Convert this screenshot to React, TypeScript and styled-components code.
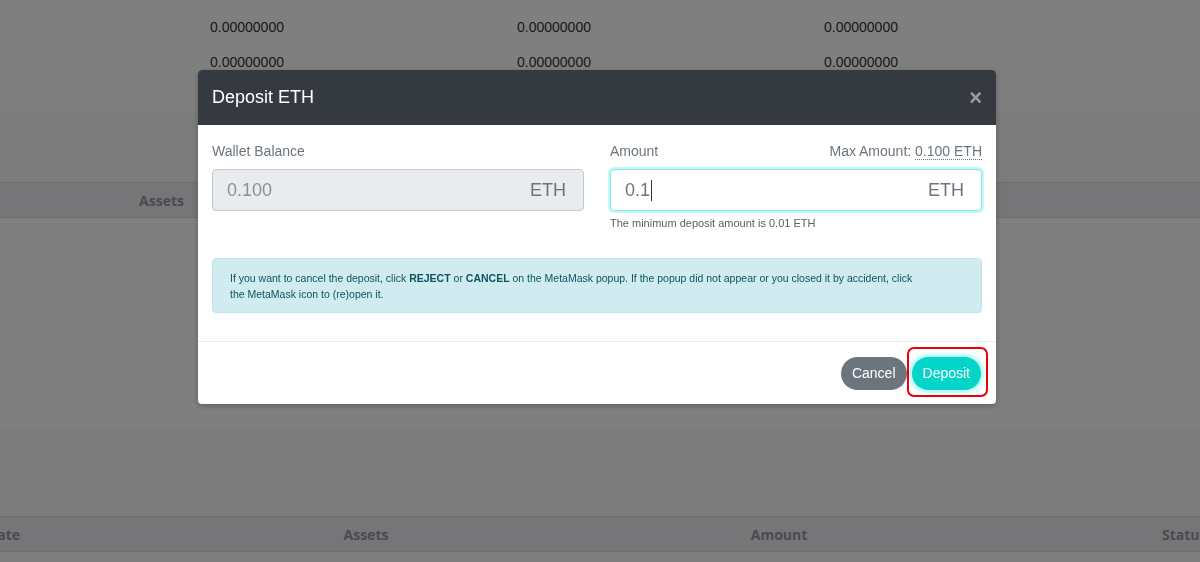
import styled, { createGlobalStyle } from "styled-components"

const GlobalStyle = createGlobalStyle`
  html, body {
    margin: 0;
    padding: 0;
    background: #fff;
    font-family: "Liberation Sans", Arial, sans-serif;
    overflow: hidden;
  }
`

const App = () => {
  return (
    <>
      <GlobalStyle />
      <Page>
        <Rows>
          <DataRow>
            <span />
            <Num>0.00000000</Num>
            <Num>0.00000000</Num>
            <Num>0.00000000</Num>
          </DataRow>
          <DataRow>
            <span />
            <Num>0.00000000</Num>
            <Num>0.00000000</Num>
            <Num>0.00000000</Num>
          </DataRow>
        </Rows>
        <Band $height={69} />
        <TopHead>
          <HeadCell $align="flex-end">Assets</HeadCell>
        </TopHead>
        <Blank $height={212} />
        <Band $height={86} />
        <BottomHead>
          <HeadCell $align="flex-end">Date</HeadCell>
          <HeadCell $align="center">Assets</HeadCell>
          <HeadCell $align="center">Amount</HeadCell>
          <HeadCell $align="flex-start">Status</HeadCell>
        </BottomHead>
      </Page>

      <Backdrop />

      <Modal>
        <Header>
          <Title>Deposit ETH</Title>
          <Close>×</Close>
        </Header>
        <Body>
          <Columns>
            <Field>
              <LabelRow>
                <Label>Wallet Balance</Label>
              </LabelRow>
              <InputBox $disabled>
                <Value $muted>0.100</Value>
                <Unit>ETH</Unit>
              </InputBox>
            </Field>
            <Field>
              <LabelRow>
                <Label>Amount</Label>
                <Label>
                  Max Amount: <Dotted>0.100 ETH</Dotted>
                </Label>
              </LabelRow>
              <InputBox $focused>
                <Value>
                  0.1<Caret />
                </Value>
                <Unit>ETH</Unit>
              </InputBox>
              <Help>The minimum deposit amount is 0.01 ETH</Help>
            </Field>
          </Columns>
          <Alert>
            If you want to cancel the deposit, click <b>REJECT</b> or <b>CANCEL</b> on the MetaMask popup. If the popup did not appear or you closed it by accident, click the MetaMask icon to (re)open it.
          </Alert>
        </Body>
        <Footer>
          <Button $variant="cancel">Cancel</Button>
          <Marked>
            <Button $variant="primary">Deposit</Button>
            <Highlight />
          </Marked>
        </Footer>
      </Modal>
    </>
  )
}

export default App

const Page = styled.div`
  width: 1200px;
  height: 562px;
  display: flex;
  flex-direction: column;
  background: #fff;
`

const Rows = styled.div`
  height: 113px;
  padding-top: 9px;
  box-sizing: border-box;
`

const DataRow = styled.div`
  display: grid;
  grid-template-columns: 210px 307px 307px 1fr;
  height: 35px;
  align-items: center;
`

const Num = styled.span`
  font-size: 14px;
  color: #333;
`

const Band = styled.div<{ $height: number }>`
  height: ${(p) => p.$height}px;
  background: #f8f8f8;
`

const Blank = styled.div<{ $height: number }>`
  height: ${(p) => p.$height}px;
`

const TopHead = styled.div`
  display: grid;
  grid-template-columns: 184px 1fr;
  height: 34px;
  background: #ececf0;
  border-top: 1px solid #dcdcdc;
  border-bottom: 1px solid #dcdcdc;
`

const BottomHead = styled.div`
  display: grid;
  grid-template-columns: 20px 692px 134px 316px 1fr;
  height: 34px;
  background: #ececf0;
  border-top: 1px solid #dcdcdc;
  border-bottom: 1px solid #dcdcdc;

  & > :last-child {
    grid-column: 5;
  }
`

const HeadCell = styled.div<{ $align: string }>`
  display: flex;
  align-items: center;
  justify-content: ${(p) => p.$align};
  white-space: nowrap;
  font-family: "Open Sans", "Liberation Sans", sans-serif;
  font-weight: 700;
  font-size: 14px;
  color: #96969e;
`

const Backdrop = styled.div`
  position: fixed;
  inset: 0;
  background: rgba(0, 0, 0, 0.5);
`

const Modal = styled.div`
  position: fixed;
  left: 198px;
  top: 70px;
  width: 798px;
  background: #fff;
  border-radius: 4px;
  box-shadow: 0 2px 6px rgba(0, 0, 0, 0.25);
`

const Header = styled.div`
  height: 55px;
  display: flex;
  align-items: center;
  justify-content: space-between;
  padding: 0 14px;
  background: #343a40;
  border-radius: 4px 4px 0 0;
`

const Title = styled.h5`
  margin: 0;
  font-size: 18px;
  font-weight: 400;
  color: #fff;
`

const Close = styled.span`
  font-size: 22px;
  font-weight: 700;
  color: #fff;
  opacity: 0.5;
  line-height: 1;
`

const Body = styled.div`
  padding: 16px 14px 28px;
`

const Columns = styled.div`
  display: grid;
  grid-template-columns: 372px 372px;
  column-gap: 26px;
  margin-bottom: 28px;
`

const Field = styled.div`
  display: flex;
  flex-direction: column;
`

const LabelRow = styled.div`
  display: flex;
  justify-content: space-between;
  height: 20px;
  margin-bottom: 8px;
`

const Label = styled.span`
  font-size: 14px;
  line-height: 20px;
  color: #6c757d;
`

const Dotted = styled.span`
  border-bottom: 1px dotted #6c757d;
`

const InputBox = styled.div<{ $disabled?: boolean; $focused?: boolean }>`
  height: 42px;
  box-sizing: border-box;
  display: flex;
  align-items: center;
  justify-content: space-between;
  padding: 0 17px 0 14px;
  border-radius: 4px;
  border: 1px solid ${(p) => (p.$focused ? "#7debea" : "#c4c9d0")};
  background: ${(p) => (p.$disabled ? "#e9ecef" : "#fff")};
  box-shadow: ${(p) => (p.$focused ? "0 0 0 2px rgba(125, 240, 240, 0.45)" : "none")};
`

const Value = styled.span<{ $muted?: boolean }>`
  display: flex;
  align-items: center;
  font-size: 18px;
  color: ${(p) => (p.$muted ? "#8a9199" : "#6c757d")};
`

const Caret = styled.span`
  display: inline-block;
  width: 1px;
  height: 21px;
  margin-left: 1px;
  background: #333;
`

const Unit = styled.span`
  font-size: 18px;
  color: #6c757d;
`

const Help = styled.small`
  margin-top: 5px;
  font-size: 11px;
  line-height: 14px;
  color: #5b6066;
`

const Alert = styled.div`
  padding: 11px 60px 10px 17px;
  border: 1px solid #bee5eb;
  border-radius: 4px;
  background: #d1ecf1;
  color: #0c5460;
  font-size: 10.5px;
  line-height: 16px;

  b {
    font-weight: 700;
  }
`

const Footer = styled.div`
  display: flex;
  justify-content: flex-end;
  align-items: center;
  gap: 5px;
  height: 62px;
  padding: 0 15px;
  border-top: 1px solid #e9ecef;
`

const Button = styled.button<{ $variant: "cancel" | "primary" }>`
  height: 33px;
  padding: 0 11px;
  border: none;
  border-radius: 17px;
  font-family: "Liberation Sans", Arial, sans-serif;
  font-size: 14px;
  color: #fff;
  background: ${(p) => (p.$variant === "primary" ? "#05d5c8" : "#6c757d")};
  box-shadow: ${(p) =>
    p.$variant === "primary" ? "0 0 5px 2px rgba(60, 235, 225, 0.55)" : "none"};
`

const Marked = styled.div`
  position: relative;
  display: flex;
`

const Highlight = styled.span`
  position: absolute;
  top: -10px;
  left: -5px;
  right: -7px;
  bottom: -7px;
  border: 2px solid #e8000b;
  border-radius: 7px;
  pointer-events: none;
`
